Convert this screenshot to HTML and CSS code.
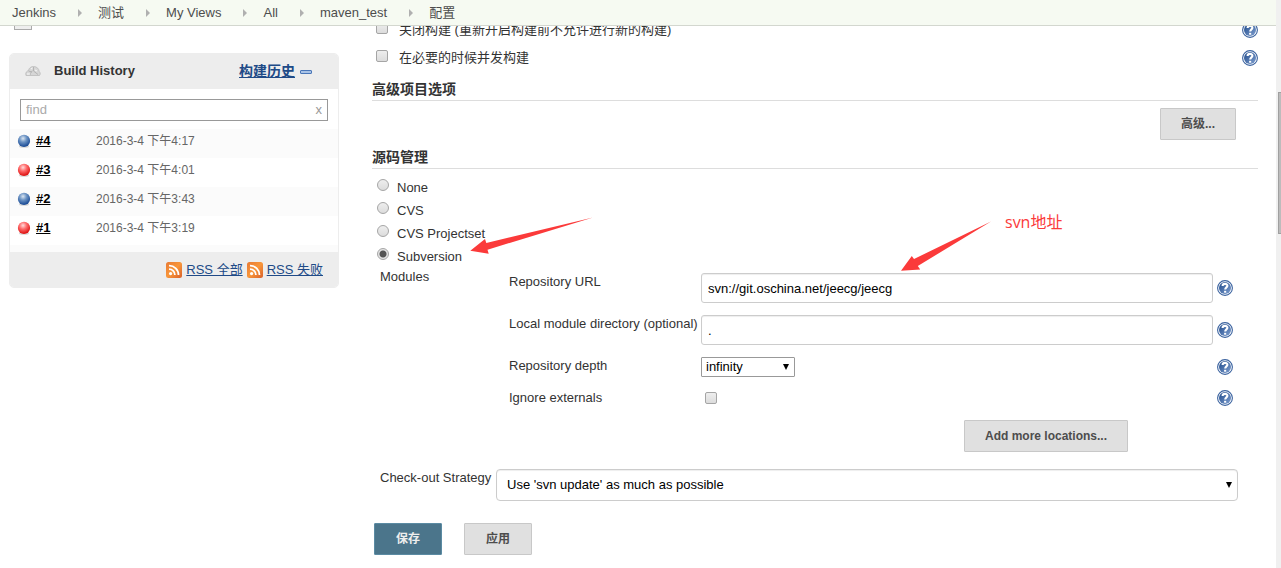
FILE: index.html
```html
<!DOCTYPE html>
<html lang="zh-CN">
<head>
    <meta charset="UTF-8">
    <meta name="viewport" content="width=device-width, initial-scale=1.0">
    <title>maven_test 配置 [Jenkins]</title>
    <link rel="stylesheet" href="styles.css">
</head>
<body>
    <svg class="defs" width="0" height="0" aria-hidden="true">
        <defs>
            <linearGradient id="helpFill" x1="0" y1="0" x2="1" y2="1">
                <stop offset="0" stop-color="#1f4a8a"/>
                <stop offset="1" stop-color="#7f9fd0"/>
            </linearGradient>
            <radialGradient id="blueFill" cx="0.42" cy="0.3" r="0.65">
                <stop offset="0" stop-color="#dce6f0"/>
                <stop offset="0.45" stop-color="#6d94c4"/>
                <stop offset="1" stop-color="#1f4f98"/>
            </radialGradient>
            <radialGradient id="redFill" cx="0.42" cy="0.3" r="0.65">
                <stop offset="0" stop-color="#ffdcdc"/>
                <stop offset="0.45" stop-color="#ff6d6d"/>
                <stop offset="1" stop-color="#e01818"/>
            </radialGradient>
            <linearGradient id="rssFill" x1="0" y1="0" x2="1" y2="1">
                <stop offset="0" stop-color="#e87a35"/>
                <stop offset="0.5" stop-color="#f8963a"/>
                <stop offset="1" stop-color="#d9602a"/>
            </linearGradient>
            <symbol id="help" viewBox="0 0 16 16">
                <circle cx="8" cy="8" r="7.4" fill="#fff" stroke="#3a629f" stroke-width="1.1"/>
                <circle cx="8" cy="8" r="6" fill="url(#helpFill)"/>
                <path d="M5.6 6C5.6 3.2 10.4 3.1 10.4 5.8 10.4 7.5 8.2 7.4 8.2 9.6" fill="none" stroke="#fff" stroke-width="2.1"/>
                <rect x="7.1" y="10.8" width="2.1" height="1.9" fill="#fff"/>
            </symbol>
            <symbol id="blueBall" viewBox="0 0 14 14">
                <ellipse cx="7" cy="12.4" rx="5" ry="1.4" fill="#d4d4d4"/>
                <circle cx="7" cy="6.9" r="6.1" fill="url(#blueFill)"/>
            </symbol>
            <symbol id="redBall" viewBox="0 0 14 14">
                <ellipse cx="7" cy="12.4" rx="5" ry="1.4" fill="#d4d4d4"/>
                <circle cx="7" cy="6.9" r="6.1" fill="url(#redFill)"/>
            </symbol>
            <symbol id="rss" viewBox="0 0 16 16">
                <rect width="16" height="16" rx="2.5" fill="url(#rssFill)"/>
                <circle cx="4.6" cy="11.6" r="1.6" fill="#fff"/>
                <path d="M3 7.2A5.8 5.8 0 0 1 8.9 13.1M3 3.6A9.4 9.4 0 0 1 12.5 13.1" fill="none" stroke="#fff" stroke-width="1.8"/>
            </symbol>
        </defs>
    </svg>

    <div class="page">
        <nav class="breadcrumbs">
            <a href="#">Jenkins</a>
            <a href="#">测试</a>
            <a href="#">My Views</a>
            <a href="#">All</a>
            <a href="#">maven_test</a>
            <a href="#">配置</a>
        </nav>

        <div class="content">
            <aside class="sidebar">
                <div class="task-icon"></div>
                <section class="history">
                    <header class="history-header">
                        <svg class="weather" width="16" height="12" viewBox="0 0 16 12">
                            <path d="M1 10.5C0 7.5 2 6 3.5 5.5 4 3 6 1.5 8.5 1.5 12 1.5 14 4 14.2 6.5 15.5 7.5 15.5 9.5 14.5 10.5Z" fill="#d6d6d6" stroke="#bbb" stroke-width="0.8"/>
                            <path d="M5 10C5 7.5 6.5 7 7.5 6M8.5 2V6L13 9.5M3.5 6L7 7" fill="none" stroke="#b0b0b0" stroke-width="0.9"/>
                            <path d="M2 9H5M6 4L7.5 3M10 5L12 6" stroke="#f8f8f8"/>
                        </svg>
                        <h2>Build History</h2>
                        <a class="trend" href="#">构建历史</a>
                        <button class="collapse" type="button" aria-label="collapse"></button>
                    </header>
                    <div class="find">
                        <input type="text" placeholder="find" aria-label="find">
                        <button type="button">x</button>
                    </div>
                    <table class="builds">
                        <tr>
                            <td><svg width="14" height="14"><use href="#blueBall"/></svg><a href="#">#4</a></td>
                            <td>2016-3-4 下午4:17</td>
                        </tr>
                        <tr>
                            <td><svg width="14" height="14"><use href="#redBall"/></svg><a href="#">#3</a></td>
                            <td>2016-3-4 下午4:01</td>
                        </tr>
                        <tr>
                            <td><svg width="14" height="14"><use href="#blueBall"/></svg><a href="#">#2</a></td>
                            <td>2016-3-4 下午3:43</td>
                        </tr>
                        <tr>
                            <td><svg width="14" height="14"><use href="#redBall"/></svg><a href="#">#1</a></td>
                            <td>2016-3-4 下午3:19</td>
                        </tr>
                    </table>
                    <footer class="feeds">
                        <svg width="16" height="16"><use href="#rss"/></svg>
                        <a href="#">RSS 全部</a>
                        <svg width="16" height="16"><use href="#rss"/></svg>
                        <a href="#">RSS 失败</a>
                    </footer>
                </section>
            </aside>

            <main class="config">
                <div class="option">
                    <input type="checkbox" id="disable">
                    <label for="disable">关闭构建 (重新开启构建前不允许进行新的构建)</label>
                    <svg class="help" width="16" height="16"><use href="#help"/></svg>
                </div>
                <div class="option">
                    <input type="checkbox" id="concurrent">
                    <label for="concurrent">在必要的时候并发构建</label>
                    <svg class="help" width="16" height="16"><use href="#help"/></svg>
                </div>

                <h3 class="section">高级项目选项</h3>
                <div class="advanced">
                    <button class="btn" type="button">高级...</button>
                </div>

                <h3 class="section">源码管理</h3>
                <div class="scm">
                    <div class="radio"><input type="radio" name="scm" id="none"><label for="none">None</label></div>
                    <div class="radio"><input type="radio" name="scm" id="cvs"><label for="cvs">CVS</label></div>
                    <div class="radio"><input type="radio" name="scm" id="cvsps"><label for="cvsps">CVS Projectset</label></div>
                    <div class="radio"><input type="radio" name="scm" id="svn" checked><label for="svn">Subversion</label></div>
                </div>

                <div class="modules">
                    <div class="modules-title">Modules</div>
                    <div class="fields">
                        <div class="field">
                            <label for="url">Repository URL</label>
                            <input class="text" type="text" id="url" value="svn://git.oschina.net/jeecg/jeecg">
                            <svg class="help" width="16" height="16"><use href="#help"/></svg>
                        </div>
                        <div class="field">
                            <label for="local">Local module directory (optional)</label>
                            <input class="text" type="text" id="local" value=".">
                            <svg class="help" width="16" height="16"><use href="#help"/></svg>
                        </div>
                        <div class="field">
                            <label for="depth">Repository depth</label>
                            <span class="select small">
                                <select id="depth"><option>infinity</option></select>
                            </span>
                            <svg class="help" width="16" height="16"><use href="#help"/></svg>
                        </div>
                        <div class="field">
                            <label for="externals">Ignore externals</label>
                            <input type="checkbox" id="externals">
                            <svg class="help" width="16" height="16"><use href="#help"/></svg>
                        </div>
                        <div class="more">
                            <button class="btn" type="button">Add more locations...</button>
                        </div>
                    </div>
                </div>

                <div class="strategy">
                    <label for="strategy">Check-out Strategy</label>
                    <span class="select large">
                        <select id="strategy"><option>Use 'svn update' as much as possible</option></select>
                    </span>
                </div>

                <div class="actions">
                    <button class="btn primary" type="submit">保存</button>
                    <button class="btn" type="button">应用</button>
                </div>

                <!-- red notes drawn over the form -->
                <svg class="note arrow-scm" width="124" height="38" viewBox="0 0 124 38">
                    <path d="M123 0.5L17.5 32.7 18.7 36.7 0.3 33.7 15 22 16.3 26Z" fill="#fb3a3a"/>
                </svg>
                <svg class="note arrow-url" width="90" height="50" viewBox="0 0 90 50">
                    <path d="M90 0.5L16.8 45 19.2 48.4 0 49.8 10.8 35 13 38Z" fill="#fb3a3a"/>
                </svg>
                <span class="note note-text">svn地址</span>
            </main>
        </div>
    </div>

    <div class="scrollbar"><div class="thumb"></div></div>
</body>
</html>
```
FILE: styles.css
```css
* {
    box-sizing: border-box;
}
body {
    margin: 0;
    display: flex;
    min-height: 100vh;
    background: #fff;
    color: #333;
    font-family: "Liberation Sans", Arial, "Noto Sans CJK SC", sans-serif;
    font-size: 13px;
    line-height: 16px;
}
button, input, select {
    font: inherit;
}
.defs {
    position: absolute;
}
.page {
    flex: 1;
    min-width: 0;
}

/* breadcrumbs */
.breadcrumbs {
    position: relative;
    z-index: 2;
    display: flex;
    align-items: center;
    height: 26px;
    padding: 1px 0 0 12px;
    background: #f6faf2;
    border-bottom: 1px solid #d3d7cf;
}
.breadcrumbs a {
    display: flex;
    align-items: center;
    color: #4d4d4d;
    text-decoration: none;
}
.breadcrumbs a + a::before {
    content: "";
    margin: 0 16px 0 22px;
    border: 4px solid transparent;
    border-left-color: #b0b0b0;
    border-right-width: 0;
}

.content {
    display: flex;
    gap: 33px;
    padding: 0 18px 0 9px;
}

/* build history */
.sidebar {
    width: 330px;
    flex-shrink: 0;
}
.task-icon {
    width: 18px;
    height: 4px;
    margin: 0 0 23px 5px;
    background: #eee;
    border: 1px solid #aaa;
    border-top: 0;
}
.history {
    border: 1px solid #ededed;
    border-radius: 5px;
    overflow: hidden;
}
.history-header {
    display: flex;
    align-items: center;
    height: 35px;
    padding: 0 26px 2px 15px;
    background: #ededed;
}
.history-header h2 {
    flex: 1;
    margin: 0 0 0 13px;
    font-size: 13px;
}
.trend {
    color: #204a87;
    font-size: 14px;
    font-weight: bold;
}
.collapse {
    width: 12px;
    height: 4px;
    margin: 2px 0 0 5px;
    padding: 0;
    background: #a9c3e6;
    border: 1px solid #4a76b8;
    border-radius: 1px;
}
.find {
    display: flex;
    height: 22px;
    margin: 10px 10px 8px;
    border: 1px solid #999;
}
.find input {
    flex: 1;
    min-width: 0;
    padding: 0 5px;
    border: 0;
    outline: 0;
}
.find input::placeholder {
    color: #aaa;
}
.find button {
    padding: 0 5px;
    background: none;
    border: 0;
    color: #999;
}
.builds {
    width: 100%;
    table-layout: fixed;
    border-collapse: collapse;
}
.builds tr {
    height: 29px;
}
.builds tr:nth-child(odd) {
    background: #fbfbfb;
}
.builds td {
    padding: 4px 0 0;
    vertical-align: top;
    color: #666;
    font-size: 12px;
}
.builds td:first-child {
    width: 86px;
    padding-left: 7px;
    font-size: 13px;
}
.builds svg {
    margin-right: 5px;
    vertical-align: -3px;
}
.builds a {
    color: #000;
    font-weight: bold;
}
.feeds {
    display: flex;
    align-items: center;
    justify-content: flex-end;
    gap: 4px;
    height: 42px;
    padding: 0 15px 0 0;
    background: #ededed;
    border-top: 7px solid #fbfbfb;
}
.feeds a {
    color: #204a87;
}

/* form */
.config {
    position: relative;
    flex: 1;
    min-width: 0;
    margin-top: -10px;
}
input[type="checkbox"], input[type="radio"] {
    appearance: none;
    width: 12px;
    height: 12px;
    margin: 0;
    background: linear-gradient(#eee, #dcdcdc);
    border: 1px solid #a5a5a5;
    border-radius: 2px;
}
input[type="radio"] {
    border-radius: 50%;
}
input[type="radio"]:checked {
    background: radial-gradient(#555 3px, #e4e4e4 4px);
}
.option {
    display: flex;
    align-items: center;
    gap: 11px;
    height: 28px;
    padding-left: 4px;
}
.option input {
    margin-bottom: 4px;
}
.help {
    display: block;
    flex-shrink: 0;
    margin-left: auto;
}
.section {
    margin: 0;
    padding-top: 7px;
    font-size: 14px;
    line-height: 21px;
    border-bottom: 1px solid #ddd;
}
.advanced {
    display: flex;
    justify-content: flex-end;
    padding: 7px 22px 0 0;
}
.btn {
    min-width: 68px;
    height: 32px;
    padding: 0 20px;
    background: #e0e0e0;
    border: 1px solid #c8c8c8;
    border-radius: 1px;
    color: #4d4d4d;
    font-size: 12px;
    font-weight: bold;
}
.btn.primary {
    background: #4b758b;
    border-color: #5b8ba3;
    color: #eee;
}
.scm {
    padding-top: 7px;
}
.radio {
    display: flex;
    align-items: center;
    gap: 8px;
    height: 23px;
    padding-left: 5px;
}
.radio input {
    margin-bottom: 6px;
}
.modules {
    display: flex;
    padding: 0 25px 0 8px;
}
.modules-title {
    width: 129px;
    padding-top: 1px;
}
.fields {
    flex: 1;
    padding-top: 5px;
}
.field {
    display: grid;
    grid-template-columns: 188px 1fr 16px;
    column-gap: 4px;
    align-items: center;
    margin-bottom: 12px;
}
.field label {
    align-self: start;
    padding-top: 1px;
    white-space: nowrap;
}
.text {
    width: 100%;
    height: 30px;
    padding: 0 6px;
    border: 1px solid #ccc;
    border-radius: 3px;
    box-shadow: inset 0 1px 1px #eee;
    color: #000;
}
.field input[type="checkbox"] {
    margin-left: 4px;
}
.select {
    position: relative;
    display: block;
}
.select select {
    appearance: none;
    display: block;
    width: 100%;
    background: none;
    color: #000;
}
.select::after {
    content: "";
    position: absolute;
    top: 50%;
    right: 6px;
    margin-top: -3px;
    border: 3px solid transparent;
    border-top: 6px solid #000;
    border-bottom: 0;
}
.small {
    width: 94px;
}
.small select {
    height: 20px;
    padding: 0 4px;
    border: 1px solid #999;
    border-radius: 1px;
}
.large {
    flex: 1;
}
.large select {
    height: 32px;
    padding: 0 10px;
    border: 1px solid #ccc;
    border-radius: 4px;
    box-shadow: inset 0 1px 1px #eee;
}
.more {
    display: flex;
    justify-content: flex-end;
    padding: 2px 105px 0 0;
}
.strategy {
    display: flex;
    gap: 4px;
    padding: 17px 20px 0 8px;
}
.strategy label {
    width: 112px;
    padding-top: 1px;
    white-space: nowrap;
}
.actions {
    display: flex;
    gap: 22px;
    padding: 22px 2px 13px;
}

/* notes */
.note {
    position: absolute;
}
.arrow-scm {
    left: 98px;
    top: 201px;
}
.arrow-url {
    left: 529px;
    top: 205px;
}
.note-text {
    left: 633px;
    top: 196px;
    color: #fb3a3a;
    font-family: "Open Sans", "Noto Sans CJK SC", sans-serif;
    font-size: 16px;
    line-height: 20px;
}

.scrollbar {
    width: 5px;
    padding: 92px 0 0 2px;
    background: #f0f0f0;
}
.thumb {
    height: 142px;
    background: #bcbcbc;
    border: 1px solid #a0a0a0;
    border-right: 0;
}
```
